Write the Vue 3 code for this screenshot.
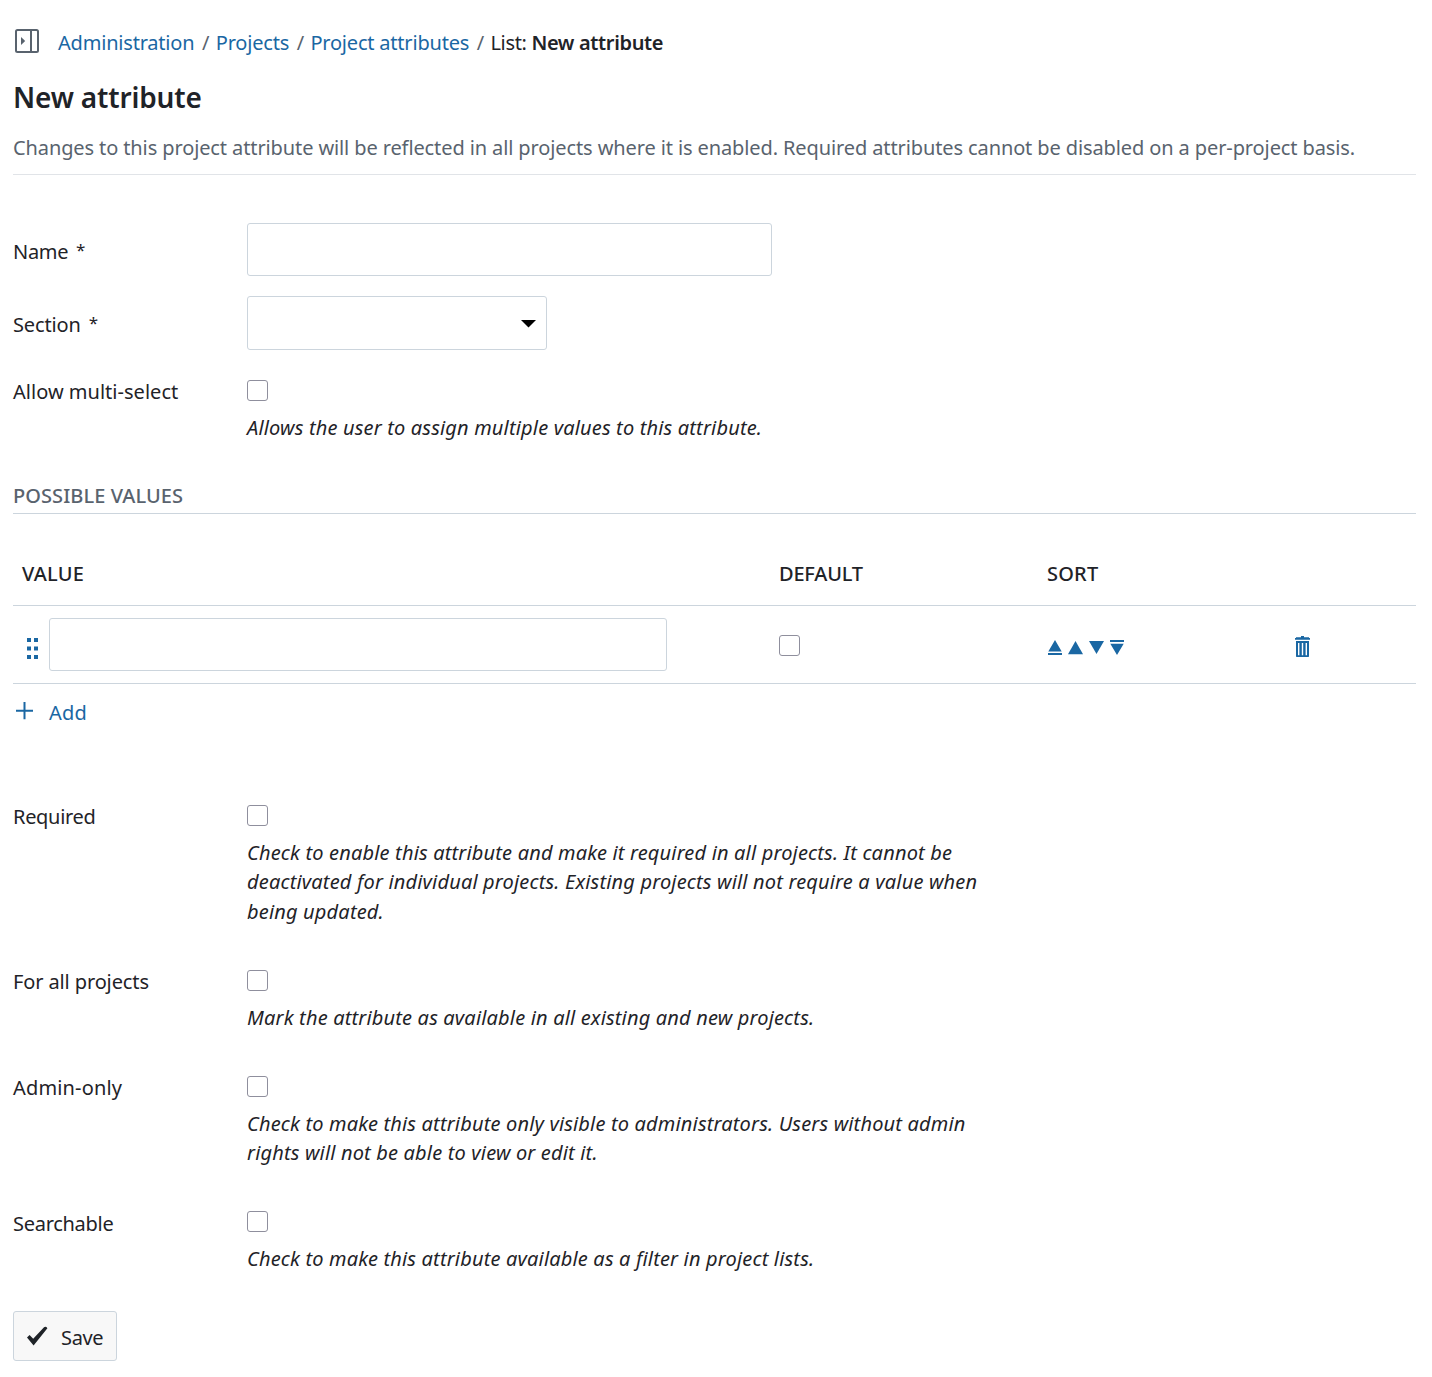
<template>
  <div class="page">
    <nav class="breadcrumb">
      <button class="menu-toggle" aria-label="Show menu">
        <svg width="24" height="24" viewBox="0 0 24 24">
          <rect x="1" y="1" width="22" height="22" rx="1.5" fill="none" stroke="#59636e" stroke-width="2" />
          <path d="M16 1.5v21" stroke="#59636e" stroke-width="2" />
          <path d="M6 8l4.2 4L6 16z" fill="#59636e" />
        </svg>
      </button>
      <ol>
        <li v-for="crumb in crumbs" :key="crumb"><a href="#">{{ crumb }}</a></li>
        <li class="current">List: <b>New attribute</b></li>
      </ol>
    </nav>

    <h1>New attribute</h1>
    <p class="description">Changes to this project attribute will be reflected in all projects where it is enabled. Required attributes cannot be disabled on a per-project basis.</p>

    <form @submit.prevent>
      <div class="field">
        <label for="name">Name <span class="star">*</span></label>
        <input id="name" v-model="name" class="text-input name-input" type="text" />
      </div>
      <div class="field section-field">
        <label for="section">Section <span class="star">*</span></label>
        <div class="select">
          <select id="section" v-model="section"><option value=""></option></select>
          <svg class="caret" width="15" height="8" viewBox="0 0 15 8"><path d="M0 0h15L7.5 7.6z" /></svg>
        </div>
      </div>
      <div class="check-field multi">
        <label for="multi">Allow multi-select</label>
        <div>
          <input id="multi" v-model="multi" type="checkbox" />
          <p class="help">Allows the user to assign multiple values to this attribute.</p>
        </div>
      </div>

      <h2>Possible values</h2>
      <div class="values">
        <div class="row head">
          <span class="value-head">Value</span>
          <span class="default-head">Default</span>
          <span class="sort-head">Sort</span>
        </div>
        <div v-for="item in values" :key="item.id" class="row">
          <div class="value-cell">
            <svg class="handle" width="11" height="22" viewBox="0 0 11 22">
              <path d="M0 0h4v4H0zM7 0h4v4H7zM0 8.6h4v4H0zM7 8.6h4v4H7zM0 17h4v4H0zM7 17h4v4H7z" />
            </svg>
            <input v-model="item.value" class="text-input" type="text" />
          </div>
          <input v-model="item.isDefault" type="checkbox" />
          <div class="sort">
            <svg width="14" height="16" viewBox="0 0 14 16"><path d="M7 0l6.7 11.5H.3zM0 13h14v2H0z" /></svg>
            <svg width="15" height="16" viewBox="0 0 15 16"><path d="M7.5 1L15 14.2H0z" /></svg>
            <svg width="15" height="16" viewBox="0 0 15 16"><path d="M0 1h15L7.5 14z" /></svg>
            <svg width="14" height="16" viewBox="0 0 14 16"><path d="M0 0h14v2H0zM.3 3.8h13.4L7 15z" /></svg>
          </div>
          <svg class="trash" width="15" height="22" viewBox="0 0 15 22">
            <path d="M6 0h3v1.2h5V2h1v1.8H0V2h1v-.8h5z" />
            <path fill-rule="evenodd" d="M1 5h13v15.5l-.6.5H1.6l-.6-.5zM3 7v12.3h1.4V7zM6.8 7v12.3h1.4V7zM10.6 7v12.3H12V7z" />
          </svg>
        </div>
      </div>
      <a class="add" href="#" @click.prevent="addValue">
        <svg width="18" height="18" viewBox="0 0 18 18"><path d="M7.5 0h2v7.7H17v2H9.5v7.5h-2V9.7H0v-2h7.5z" /></svg>
        <span>Add</span>
      </a>

      <div class="options">
        <div v-for="option in options" :key="option.id" class="check-field" :class="option.id">
          <label :for="option.id">{{ option.label }}</label>
          <div>
            <input :id="option.id" v-model="option.checked" type="checkbox" />
            <p class="help">
              <span v-for="line in option.help" :key="line">{{ line }}</span>
            </p>
          </div>
        </div>
      </div>

      <button class="save">
        <svg width="22" height="20" viewBox="0 0 22 20"><path d="M1 11.6l2.6-2.5 3.6 3.6L18 1.2q1.9-1.2 3.4 1L7.6 19.4z" fill="#1f2328" /></svg>
        <span>Save</span>
      </button>
    </form>
  </div>
</template>

<script setup>
import { ref } from 'vue';

const crumbs = ['Administration', 'Projects', 'Project attributes'];
const name = ref('');
const section = ref('');
const multi = ref(false);
const values = ref([{ id: 1, value: '', isDefault: false }]);
const options = ref([
  {
    id: 'required',
    label: 'Required',
    checked: false,
    help: [
      'Check to enable this attribute and make it required in all projects. It cannot be',
      'deactivated for individual projects. Existing projects will not require a value when',
      'being updated.',
    ],
  },
  {
    id: 'for-all',
    label: 'For all projects',
    checked: false,
    help: ['Mark the attribute as available in all existing and new projects.'],
  },
  {
    id: 'admin-only',
    label: 'Admin-only',
    checked: false,
    help: [
      'Check to make this attribute only visible to administrators. Users without admin',
      'rights will not be able to view or edit it.',
    ],
  },
  {
    id: 'searchable',
    label: 'Searchable',
    checked: false,
    help: ['Check to make this attribute available as a filter in project lists.'],
  },
]);

function addValue() {
  values.value.push({ id: Date.now(), value: '', isDefault: false });
}
</script>

<style>
body {
  background: #fff;
}
</style>

<style scoped>
.page {
  box-sizing: border-box;
  min-height: 1377px;
  padding: 27px 16px 16px 13px;
  color: #1f2328;
  font-family: "Segoe UI", "Noto Sans", sans-serif;
  font-size: 20px;
  line-height: 30px;
  letter-spacing: -0.3px;
  white-space: nowrap;
}

a {
  color: #1a67a3;
  text-decoration: none;
}

svg {
  display: block;
  flex: none;
}

.breadcrumb {
  display: flex;
  height: 30px;
}

.menu-toggle {
  width: 24px;
  height: 24px;
  margin: 2px 19px 0 2px;
  padding: 0;
  border: none;
  background: none;
}

.breadcrumb ol {
  display: flex;
  margin: 0;
  padding: 1px 0 0;
  list-style: none;
  letter-spacing: -0.2px;
}

.breadcrumb li:not(.current)::after {
  content: "/";
  margin: 0 6.5px 0 7.6px;
  color: #59636e;
}

.breadcrumb .current {
  letter-spacing: -0.35px;
}

.breadcrumb b {
  font-weight: 600;
}

h1 {
  margin: 20px 0 15px;
  font-size: 28px;
  font-weight: 600;
  line-height: 40px;
  letter-spacing: -0.17px;
}

.description {
  margin: 0;
  padding: 1px 0 11px;
  border-bottom: 1px solid #e1e4e8;
  color: #59636e;
  letter-spacing: -0.11px;
}

form {
  padding-top: 48px;
}

.field {
  display: grid;
  grid-template-columns: 234px auto;
  justify-content: start;
  height: 53px;
  margin-bottom: 20px;
}

.field label {
  padding-top: 14px;
}

.star {
  margin-left: 3px;
  font-size: 17px;
  line-height: 1;
  vertical-align: 3px;
}

.text-input,
select {
  box-sizing: border-box;
  height: 53px;
  padding: 0 12px;
  border: 1px solid #ccd5dd;
  border-radius: 3px;
  background: #fff;
  font: inherit;
  outline: none;
}

.name-input {
  width: 525px;
}

.section-field {
  height: 54px;
  margin-bottom: 30px;
  letter-spacing: -0.15px;
}

.select {
  position: relative;
}

select {
  width: 300px;
  height: 54px;
  appearance: none;
}

.caret {
  position: absolute;
  top: 24px;
  right: 11.5px;
}

.check-field {
  display: grid;
  grid-template-columns: 234px auto;
  justify-content: start;
  line-height: 22px;
}

.check-field label {
  padding-top: 1px;
}

.multi label {
  letter-spacing: 0.02px;
}

.for-all label {
  letter-spacing: -0.12px;
}

.admin-only label {
  letter-spacing: 0.15px;
}

.searchable label {
  padding-top: 1.6px;
  letter-spacing: -0.28px;
}

input[type="checkbox"] {
  appearance: none;
  display: block;
  box-sizing: border-box;
  width: 21px;
  height: 21px;
  margin: 0;
  border: 1px solid #8f8f9d;
  border-radius: 3px;
  background: #fff;
}

.help {
  margin: 12px 0 0;
  font-style: italic;
  line-height: 29.5px;
  letter-spacing: 0.17px;
}

.help span {
  display: block;
}

h2 {
  margin: 38px 0 0;
  padding: 0 0 2px;
  border-bottom: 1px solid #ccd5dd;
  color: #59636e;
  font-size: 20px;
  font-weight: 500;
  line-height: 30px;
  letter-spacing: 0.07px;
  text-transform: uppercase;
}

.values {
  padding-top: 26px;
}

.row {
  display: grid;
  grid-template-columns: 766px 268px 247px auto;
  align-items: center;
  justify-content: start;
  height: 77px;
  border-bottom: 1px solid #ccd5dd;
}

.row input[type="checkbox"] {
  margin-top: 2px;
}

.head {
  height: 65px;
  font-weight: 500;
  text-transform: uppercase;
}

.head span {
  padding-top: 3px;
}

.value-head {
  padding-left: 9px;
  letter-spacing: 0.2px;
}

.default-head {
  letter-spacing: -0.2px;
}

.sort-head {
  letter-spacing: 0.2px;
}

.value-cell {
  display: flex;
  align-items: center;
}

.handle {
  margin: 9px 11px 0 14px;
}

.value-cell .text-input {
  width: 618px;
}

.handle,
.sort,
.trash,
.add {
  fill: #1a67a3;
}

.sort {
  display: flex;
  gap: 6px;
  padding: 7px 0 0 0.6px;
}

.trash {
  margin: 5px 0 0 1px;
}

.add {
  display: flex;
  gap: 15px;
  width: 80px;
  margin: 14px 0 0 3px;
  letter-spacing: 0.2px;
}

.add svg {
  margin-top: 4px;
}

.options {
  display: grid;
  gap: 43.5px;
  padding-top: 77px;
}

.save {
  display: flex;
  align-items: center;
  gap: 13px;
  box-sizing: border-box;
  width: 104px;
  height: 50px;
  margin-top: 37px;
  padding: 4px 12px 0;
  border: 1px solid #ccd5dd;
  border-radius: 3px;
  background: #f8f8f8;
  color: #1f2328;
  font: inherit;
  letter-spacing: -0.35px;
}

.save svg {
  margin-top: -3px;
}
</style>
